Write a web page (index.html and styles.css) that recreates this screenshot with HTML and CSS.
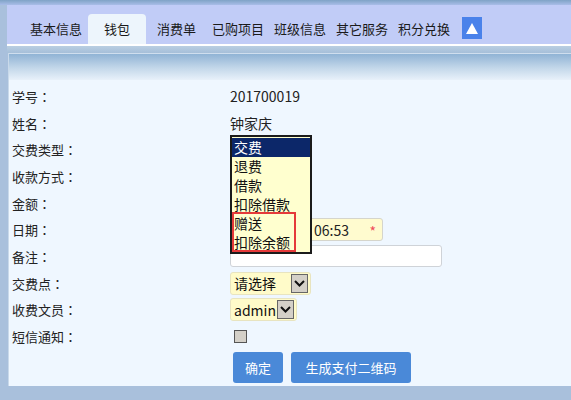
FILE: index.html
```html
<!DOCTYPE html>
<html lang="zh-CN">

<head>
  <meta charset="UTF-8">
  <title>钱包</title>
  <link rel="stylesheet" href="styles.css">
</head>

<body>
  <div class="topline"></div>
  <div class="main">
    <div class="tabs">
      <span class="tab tab-first">基本信息</span>
      <span class="tab tab-active">钱包</span>
      <span class="tab tab-wide">消费单</span>
      <span class="tab tab-wide">已购项目</span>
      <span class="tab">班级信息</span>
      <span class="tab">其它服务</span>
      <span class="tab">积分兑换</span>
      <span class="tab-up"><svg width="12" height="11" viewBox="0 0 12 11"><polygon points="6,0 12,11 0,11" fill="#fff"/></svg></span>
    </div>
    <div class="tabs-line"></div>
    <div class="panel">
      <div class="panel-head"></div>
      <div class="panel-body">
        <div class="form">
          <div class="label">学号<span class="colon">：</span></div>
          <div class="value">201700019</div>

          <div class="label">姓名<span class="colon">：</span></div>
          <div class="value">钟家庆</div>

          <div class="label">交费类型<span class="colon">：</span></div>
          <div class="value">
            <div class="listbox">
              <div class="option option-on">交费</div>
              <div class="option">退费</div>
              <div class="option">借款</div>
              <div class="option">扣除借款</div>
              <div class="option">赠送</div>
              <div class="option">扣除余额</div>
              <div class="mark"></div>
            </div>
          </div>

          <div class="label">收款方式<span class="colon">：</span></div>
          <div class="value"></div>

          <div class="label">金额<span class="colon">：</span></div>
          <div class="value"></div>

          <div class="label">日期<span class="colon">：</span></div>
          <div class="value">
            <div class="input input-date"><span class="date-text">06:53</span><span class="req">*</span></div>
          </div>

          <div class="label">备注<span class="colon">：</span></div>
          <div class="value">
            <div class="input input-note"></div>
          </div>

          <div class="label">交费点<span class="colon">：</span></div>
          <div class="value">
            <div class="select select-point"><span class="select-text">请选择</span><span class="select-btn"><svg width="11" height="7" viewBox="0 0 11 7"><polyline points="1,1 5.5,5.5 10,1" fill="none" stroke="#111" stroke-width="2"/></svg></span></div>
          </div>

          <div class="label">收费文员<span class="colon">：</span></div>
          <div class="value">
            <div class="select select-clerk"><span class="select-text">admin</span><span class="select-btn"><svg width="11" height="7" viewBox="0 0 11 7"><polyline points="1,1 5.5,5.5 10,1" fill="none" stroke="#111" stroke-width="2"/></svg></span></div>
          </div>

          <div class="label">短信通知<span class="colon">：</span></div>
          <div class="value">
            <span class="checkbox"></span>
          </div>
        </div>
        <div class="actions">
          <button class="btn btn-ok">确定</button>
          <button class="btn btn-qr">生成支付二维码</button>
        </div>
      </div>
    </div>
  </div>
</body>

</html>
```

FILE: styles.css
```css
* {
  margin: 0;
  padding: 0;
  box-sizing: border-box;
}

body {
  width: 571px;
  height: 400px;
  overflow: hidden;
  background-color: #a9c0dc;
  font-family: "Noto Sans CJK SC", "Noto Sans", sans-serif;
  font-size: 13px;
  color: #222;
}

.topline {
  height: 5px;
  background: linear-gradient(180deg, #7fa3c6 0%, #a9bde8 100%);
}

.main {
  margin-left: 7px;
}

.tabs {
  display: flex;
  align-items: flex-end;
  height: 39px;
  padding-left: 18px;
  background-color: #c1ccf7;
}

.tab {
  height: 30px;
  line-height: 30px;
  padding: 0 5px;
  color: #1a1a1a;
  white-space: nowrap;
}

.tab-first {
  margin-right: 1px;
}

.tab-active {
  padding: 0 16px;
  background-color: #edf5fc;
  border-radius: 4px 4px 0 0;
}

.tab-wide {
  margin-left: 6px;
}

.tab-up {
  display: flex;
  align-items: center;
  justify-content: center;
  width: 20px;
  height: 22px;
  margin-left: 7px;
  margin-bottom: 5px;
  background-color: #4a82ea;
}

.tabs-line {
  height: 9px;
  border-top: 2px solid #fff;
  background: linear-gradient(180deg, #b9cee2 0%, #a6bfd9 100%);
}

.panel {
  margin-left: 1px;
  border-left: 1px solid #c9d9ea;
}

.panel-head {
  height: 27px;
  border-top: 1px solid #cfdeee;
  background: linear-gradient(180deg, #90b3d5 0%, #c4d8ea 55%, #e8f1fa 100%);
}

.panel-body {
  height: 306px;
  padding: 3px 0 0 3px;
  background-color: #eff7ff;
}

.form {
  display: grid;
  grid-template-columns: 218px 1fr;
  grid-auto-rows: 26.7px;
}

.label {
  display: flex;
  align-items: center;
  color: #222;
}

.colon {
  font-family: "Noto Sans CJK TC", "Noto Sans CJK SC", sans-serif;
}

.value {
  position: relative;
  display: flex;
  align-items: center;
  font-size: 14px;
}

.listbox {
  position: absolute;
  top: -1px;
  left: 0;
  z-index: 2;
  width: 82px;
  padding-top: 1px;
  border: 2px solid #1b1b1b;
  background-color: #ffffcf;
}

.option {
  height: 19px;
  line-height: 19px;
  padding-left: 2px;
  font-size: 14px;
  color: #111;
}

.option-on {
  background-color: #0c2769;
  color: #fff;
}

.mark {
  position: absolute;
  top: 75px;
  left: 0;
  width: 64px;
  height: 40px;
  border: 2px solid #e53a3a;
}

.input {
  position: relative;
  height: 23px;
  border: 1px solid #d5d5cc;
  border-radius: 3px;
}

.input-date {
  display: flex;
  align-items: center;
  width: 153px;
  padding-left: 83px;
  background-color: #fffbcf;
}

.date-text {
  white-space: nowrap;
  font-size: 14px;
}

.req {
  position: absolute;
  right: 6px;
  top: 2px;
  color: #f04b5a;
  font-size: 14px;
}

.input-note {
  width: 212px;
  height: 22px;
  background-color: #fff;
  border-color: #cfd3d8;
}

.select {
  display: flex;
  align-items: center;
  justify-content: space-between;
  height: 23px;
  padding: 0 2px 0 3px;
  border: 1px solid #e8e4c0;
  border-radius: 3px;
  background-color: #fffbc9;
}

.select-point {
  width: 81px;
}

.select-clerk {
  width: 67px;
}

.select-text {
  font-size: 14px;
  color: #111;
}

.select-btn {
  display: flex;
  align-items: center;
  justify-content: center;
  width: 17px;
  height: 19px;
  border: 1px solid #666;
  background-color: #d4d0c8;
}

.checkbox {
  display: block;
  width: 13px;
  height: 13px;
  margin-left: 4px;
  border: 1px solid #555;
  background-color: #d4d0c8;
}

.actions {
  display: flex;
  gap: 8px;
  margin: 2px 0 0 221px;
}

.btn {
  height: 31px;
  border: none;
  border-radius: 3px;
  background-color: #4a89d8;
  color: #fff;
  font-family: "Noto Sans CJK SC", "Noto Sans", sans-serif;
  font-size: 13px;
}

.btn-ok {
  width: 50px;
}

.btn-qr {
  width: 120px;
}
```
